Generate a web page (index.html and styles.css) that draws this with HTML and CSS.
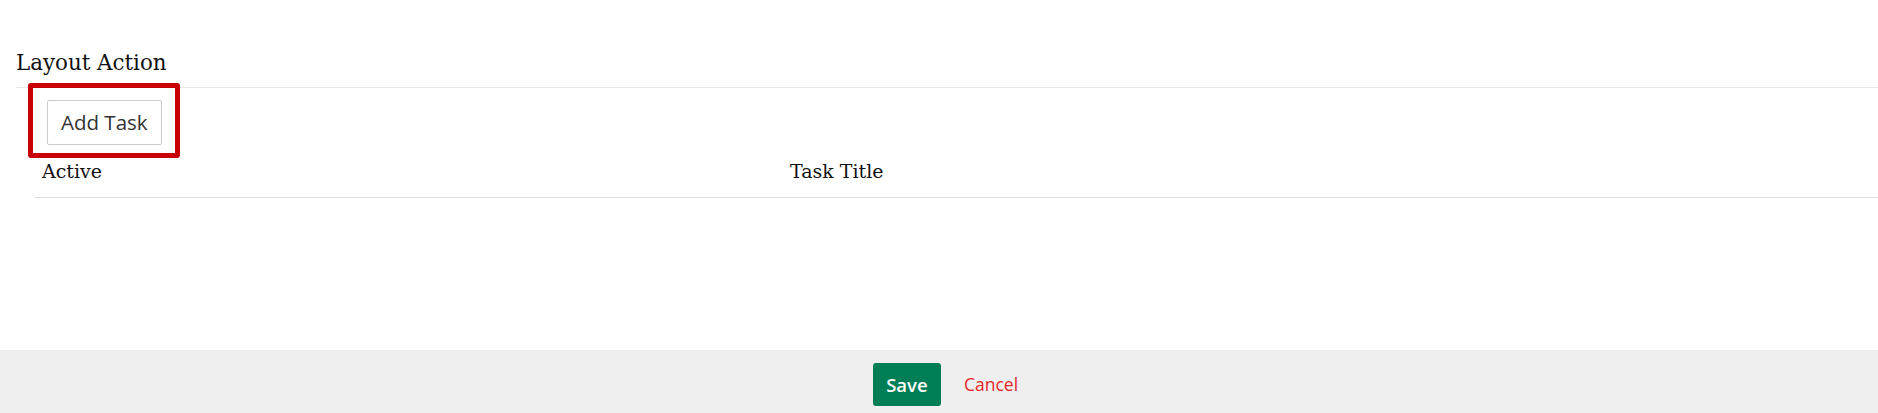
FILE: index.html
```html
<!DOCTYPE html>
<html lang="en">
<head>
<meta charset="utf-8">
<title>Layout Action</title>
<link rel="stylesheet" href="styles.css">
</head>
<body>
<main class="page">
  <h2 class="title">Layout Action</h2>
  <section class="panel">
    <div class="toolbar">
      <button class="btn-default" type="button">Add Task</button>
      <span class="highlight" aria-hidden="true"></span>
    </div>
    <div class="table">
      <div class="th th-active">Active</div>
      <div class="th th-title">Task Title</div>
    </div>
  </section>
</main>
<footer class="footer">
  <button class="btn-save" type="button">Save</button>
  <a class="link-cancel" href="#">Cancel</a>
</footer>
</body>
</html>
```

FILE: styles.css
```css
html, body {
  margin: 0;
  padding: 0;
  background: #ffffff;
}

body {
  display: flex;
  flex-direction: column;
  min-height: 413px;
  font-family: "DejaVu Serif", "Liberation Serif", serif;
  color: #111;
}

.page {
  flex: 1;
  padding: 0 0 0 16px;
}

.title {
  margin: 51px 0 0 0;
  font-size: 21.4px;
  line-height: 24px;
  font-weight: normal;
  color: #111;
}

.panel {
  margin-top: 12px;
  border-top: 1px solid #e8e8e8;
  padding: 12px 0 0 19px;
}

.toolbar {
  position: relative;
  padding-left: 12px;
}

.btn-default {
  font-family: "Open Sans", "Liberation Sans", sans-serif;
  font-size: 20.5px;
  line-height: 27px;
  color: #333;
  background: #fff;
  border: 1px solid #cccccc;
  border-radius: 2px;
  padding: 8px 13px;
  margin: 0;
  cursor: pointer;
}

.highlight {
  position: absolute;
  left: -7px;
  top: -17px;
  width: 142px;
  height: 65px;
  border: 5px solid #c80000;
  border-radius: 3px;
  pointer-events: none;
}

.table {
  display: grid;
  grid-template-columns: 748px 1fr;
  border-bottom: 1px solid #dddddd;
}

.th {
  font-size: 19px;
  line-height: 26px;
  padding: 13px 7px 13px;
  color: #111;
}

.footer {
  height: 63px;
  box-sizing: border-box;
  background: #efefef;
  display: flex;
  justify-content: center;
  align-items: flex-start;
  gap: 23px;
  padding: 13px 0 0 13px;
}

.btn-save {
  font-family: "Open Sans", "Liberation Sans", sans-serif;
  font-weight: 600;
  font-size: 18.5px;
  line-height: 27px;
  color: #fff;
  background: #007f56;
  border: 0;
  border-radius: 3px;
  width: 68px;
  height: 43px;
  padding: 0;
}

.link-cancel {
  font-family: "Open Sans", "Liberation Sans", sans-serif;
  font-size: 17.5px;
  line-height: 43px;
  color: #e8262a;
  text-decoration: none;
}
```
